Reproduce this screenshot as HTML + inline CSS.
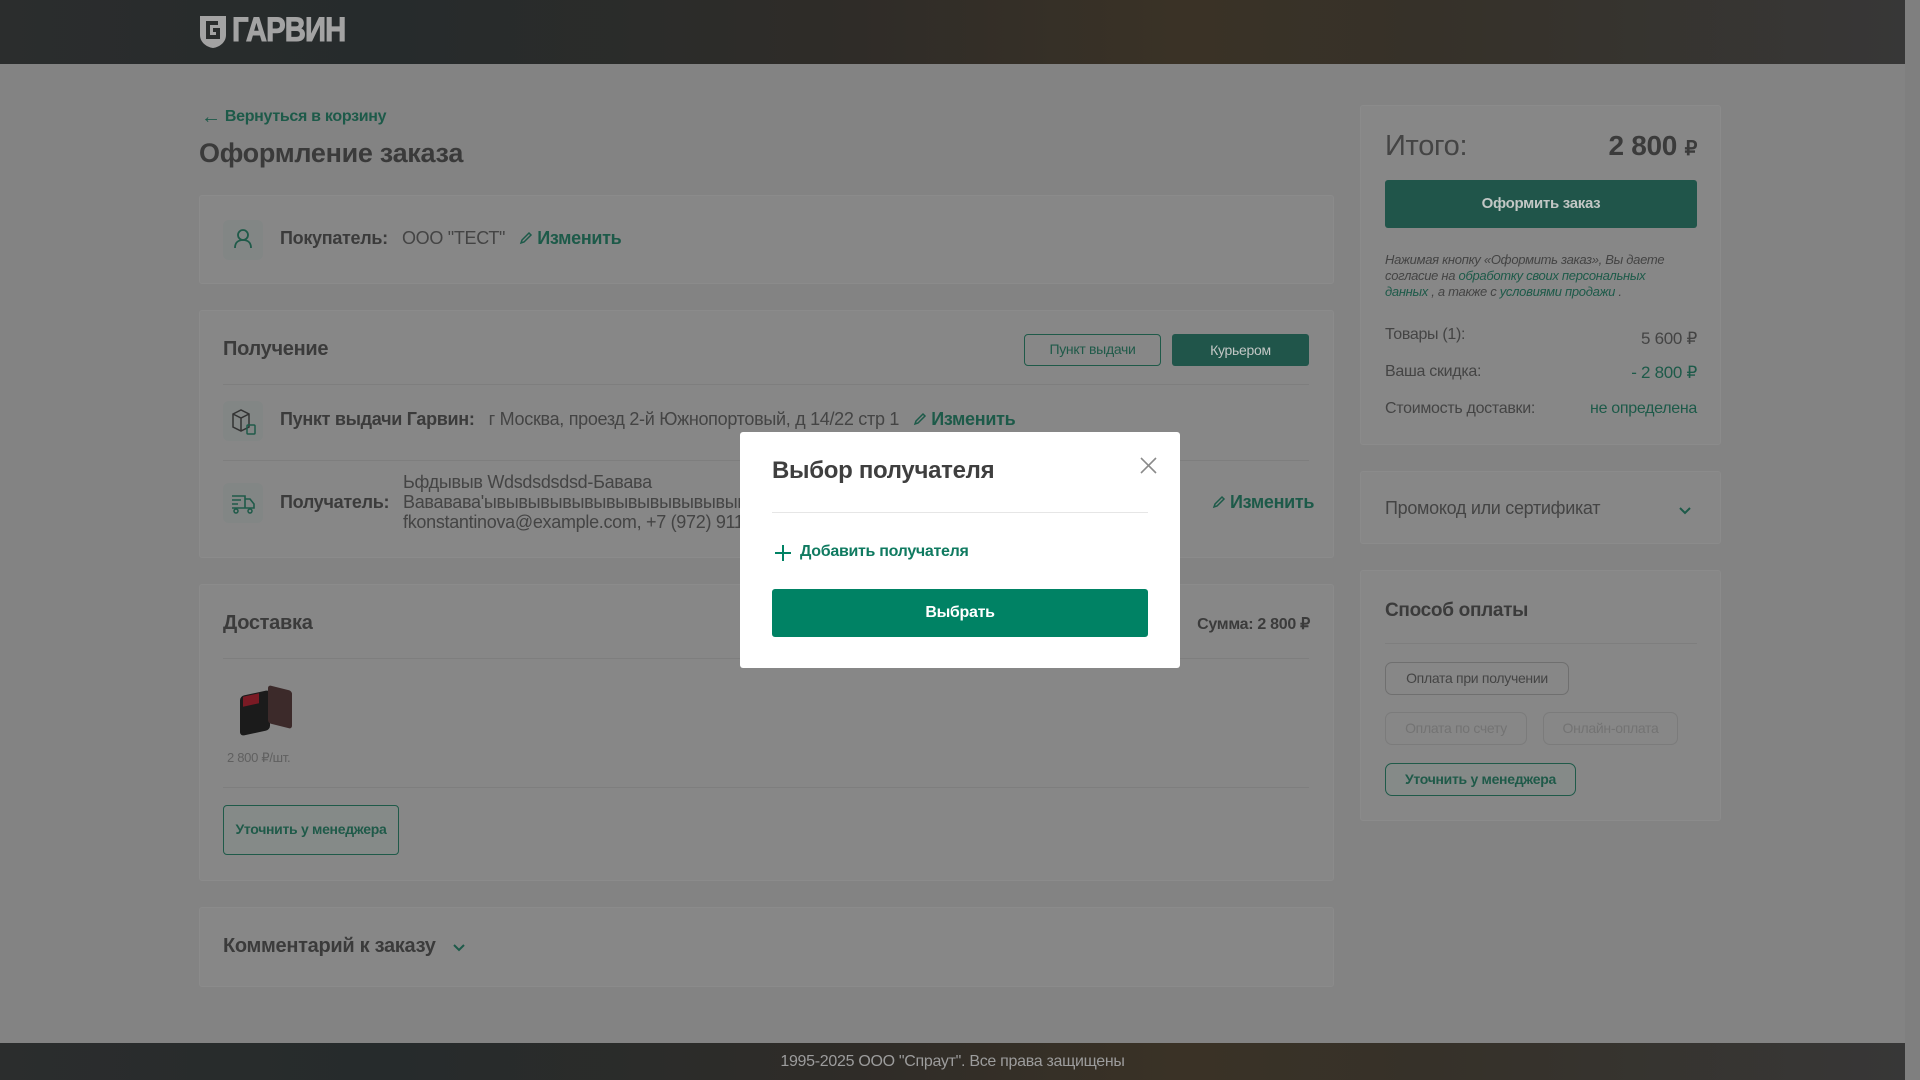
<!DOCTYPE html>
<html><head><meta charset="utf-8"><style>
*{box-sizing:border-box;margin:0;padding:0}
body{width:1920px;height:1080px;overflow:hidden;background:#838383;font-family:"Liberation Sans",sans-serif;color:#3b3b3b;position:relative;letter-spacing:-0.3px}
.abs{position:absolute}
.hdr{left:0;top:0;width:1905px;height:64px;background:linear-gradient(90deg,#2b2d2d 0%,#262b2c 20%,#2f2c28 45%,#3a3226 62%,#363129 75%,#373737 100%)}
.ftr{left:0;top:1043px;width:1905px;height:37px;background:linear-gradient(90deg,#2b2d2d 0%,#262b2c 20%,#2f2c28 45%,#3a3226 62%,#363129 75%,#373737 100%);color:#9c9c9c;font-size:16px;text-align:center;line-height:37px}
.sb{left:1905px;top:0;width:15px;height:1080px;background:#7f7f7f}
.card{background:#878787;border:1px solid #8b8b8b;border-radius:3px}
.g{color:#1d5a49}
.line{height:1px;background:#7e7e7e}
.ib{width:40px;height:40px;border-radius:6px;background:#828685}
.b{font-weight:bold}
.btnf{background:#20554a;border-radius:3px;color:#c2c7c5;text-align:center}
.btno{border:1.5px solid #1f5a49;border-radius:4px;text-align:center;color:#1f5a49}
.pill{border:1.5px solid #6f6f6f;border-radius:7px;font-size:14px;text-align:center;color:#444}
.pen{display:inline-block;width:14px;height:14px;vertical-align:-1px;margin-right:4px}
</style></head><body>
<div class="abs hdr"></div>
<div class="abs" style="left:199px;top:15px;width:28px;height:34px">
<svg width="28" height="34" viewBox="0 0 28 34"><path d="M1 1H27V20C27 27 21 32 14 33C7 32 1 27 1 20Z" fill="#a3a3a3"/><path d="M19 8H9V22H19V15H14" fill="none" stroke="#2a2d2d" stroke-width="4"/></svg></div>
<div class="abs b" style="left:232px;top:11px;font-size:34px;color:#a3a3a3;letter-spacing:-1px;transform:scaleX(0.86);transform-origin:left;-webkit-text-stroke:1px #a3a3a3">ГАРВИН</div>

<div class="abs g" style="left:201px;top:106px;font-size:16px;font-weight:bold"><span style="font-size:20px;vertical-align:-2px">←</span> Вернуться в корзину</div>
<div class="abs b" style="left:199px;top:138px;font-size:27px;color:#3a3a3a">Оформление заказа</div>

<!-- card1 -->
<div class="abs card" style="left:199px;top:195px;width:1135px;height:89px"></div>
<div class="abs ib" style="left:223px;top:220px"><svg width="40" height="40" viewBox="0 0 40 40"><circle cx="20" cy="15" r="5" fill="none" stroke="#1f5a49" stroke-width="1.8"/><path d="M12 28C12 22 16 20 20 20C24 20 28 22 28 28" fill="none" stroke="#1f5a49" stroke-width="1.8"/></svg></div>
<div class="abs" style="left:280px;top:228px;font-size:18px"><b>Покупатель:</b>&nbsp;&nbsp; <span style="color:#444">ООО "ТЕСТ"</span> &nbsp; <span class="g b"><svg class="pen" viewBox="0 0 14 14"><path d="M2 12L3 9L10 2L12 4L5 11Z" fill="none" stroke="#1d5a49" stroke-width="1.5"/></svg>Изменить</span></div>

<!-- card2 -->
<div class="abs card" style="left:199px;top:310px;width:1135px;height:248px"></div>
<div class="abs b" style="left:223px;top:338px;font-size:20px">Получение</div>
<div class="abs btno" style="left:1024px;top:334px;width:137px;height:32px;line-height:29px;font-size:14px">Пункт выдачи</div>
<div class="abs btnf" style="left:1172px;top:334px;width:137px;height:32px;line-height:32px;font-size:14px">Курьером</div>
<div class="abs line" style="left:223px;top:384px;width:1086px"></div>
<div class="abs ib" style="left:223px;top:401px"><svg width="40" height="40" viewBox="0 0 40 40"><path d="M10 13L18 9L26 13V26L18 30L10 26Z M10 13L18 17L26 13 M18 17V30" fill="none" stroke="#333" stroke-width="1.5"/><rect x="24" y="24" width="8" height="9" rx="1" fill="none" stroke="#1f5a49" stroke-width="1.5"/></svg></div>
<div class="abs" style="left:280px;top:409px;font-size:18px"><b>Пункт выдачи Гарвин:</b>&nbsp;&nbsp; <span style="color:#444">г Москва, проезд 2-й Южнопортовый, д 14/22 стр 1</span> &nbsp; <span class="g b"><svg class="pen" viewBox="0 0 14 14"><path d="M2 12L3 9L10 2L12 4L5 11Z" fill="none" stroke="#1d5a49" stroke-width="1.5"/></svg>Изменить</span></div>
<div class="abs line" style="left:223px;top:460px;width:1086px"></div>
<div class="abs ib" style="left:223px;top:483px"><svg width="40" height="40" viewBox="0 0 40 40"><path d="M9 13H22V25 M22 16H27L31 21V25H9 M9 17H18 M9 21H15" fill="none" stroke="#1f5a49" stroke-width="1.6"/><circle cx="13" cy="28" r="2" fill="none" stroke="#1f5a49" stroke-width="1.5"/><circle cx="27" cy="28" r="2" fill="none" stroke="#1f5a49" stroke-width="1.5"/></svg></div>
<div class="abs b" style="left:280px;top:492px;font-size:18px">Получатель:</div>
<div class="abs" style="left:403px;top:472px;font-size:18px;line-height:20px;color:#444;width:340px;overflow:hidden;white-space:nowrap">Ьфдывыв Wdsdsdsdsd-Бавава<br>Вававава'ывывывывывывывывывывывывыв<br>fkonstantinova@example.com, +7 (972) 911</div>
<div class="abs g b" style="left:1212px;top:492px;font-size:18px"><svg class="pen" viewBox="0 0 14 14"><path d="M2 12L3 9L10 2L12 4L5 11Z" fill="none" stroke="#1d5a49" stroke-width="1.5"/></svg>Изменить</div>

<!-- card3 -->
<div class="abs card" style="left:199px;top:584px;width:1135px;height:297px"></div>
<div class="abs b" style="left:223px;top:612px;font-size:20px">Доставка</div>
<div class="abs b" style="left:1150px;top:614px;width:160px;text-align:right;font-size:16px">Сумма: 2 800 ₽</div>
<div class="abs line" style="left:223px;top:658px;width:1086px"></div>
<div class="abs" style="left:240px;top:693px;width:30px;height:40px;background:#1b1b1b;border-radius:4px;transform:skewY(-12deg)"></div>
<div class="abs" style="left:243px;top:695px;width:16px;height:10px;background:#7a1a24;transform:skewY(-12deg)"></div>
<div class="abs" style="left:268px;top:688px;width:24px;height:38px;background:#3c2a2a;border-radius:3px;transform:skewY(14deg)"></div>
<div class="abs" style="left:227px;top:750px;font-size:13px;color:#606060">2 800 ₽/шт.</div>
<div class="abs line" style="left:223px;top:787px;width:1086px"></div>
<div class="abs btno b" style="left:223px;top:805px;width:176px;height:50px;line-height:47px;font-size:14px;background:#858a88">Уточнить у менеджера</div>

<!-- card4 -->
<div class="abs card" style="left:199px;top:907px;width:1135px;height:80px"></div>
<div class="abs b" style="left:223px;top:935px;font-size:20px">Комментарий к заказу</div>
<div class="abs" style="left:452px;top:940px"><svg width="14" height="10" viewBox="0 0 14 10"><path d="M2 2L7 7L12 2" fill="none" stroke="#1d5a49" stroke-width="2"/></svg></div>

<!-- right -->
<div class="abs card" style="left:1360px;top:105px;width:361px;height:340px"></div>
<div class="abs" style="left:1385px;top:130px;font-size:29px;color:#444">Итого:</div>
<div class="abs b" style="left:1560px;top:130px;width:137px;text-align:right;font-size:28px">2 800 <span style="font-size:20px">₽</span></div>
<div class="abs btnf" style="left:1385px;top:180px;width:312px;height:48px;line-height:48px;font-size:15px;font-weight:bold">Оформить заказ</div>
<div class="abs" style="left:1385px;top:252px;width:292px;font-size:13px;line-height:16px;font-style:italic;color:#444">Нажимая кнопку «Оформить заказ», Вы даете согласие на <span class="g">обработку своих персональных данных</span> , а также с <span class="g">условиями продажи</span> .</div>
<div class="abs" style="left:1385px;top:326px;font-size:16px;color:#444">Товары (1):</div>
<div class="abs" style="left:1560px;top:329px;width:137px;text-align:right;font-size:17px;color:#444">5 600 ₽</div>
<div class="abs" style="left:1385px;top:363px;font-size:16px;color:#444">Ваша скидка:</div>
<div class="abs g" style="left:1560px;top:363px;width:137px;text-align:right;font-size:17px">- 2 800 ₽</div>
<div class="abs" style="left:1385px;top:400px;font-size:16px;color:#444">Стоимость доставки:</div>
<div class="abs g" style="left:1560px;top:400px;width:137px;text-align:right;font-size:16px">не определена</div>

<div class="abs card" style="left:1360px;top:471px;width:361px;height:73px"></div>
<div class="abs" style="left:1385px;top:498px;font-size:18px;color:#444">Промокод или сертификат</div>
<div class="abs" style="left:1678px;top:503px"><svg width="14" height="10" viewBox="0 0 14 10"><path d="M2 2L7 7L12 2" fill="none" stroke="#1d5a49" stroke-width="2"/></svg></div>

<div class="abs card" style="left:1360px;top:570px;width:361px;height:251px"></div>
<div class="abs b" style="left:1385px;top:600px;font-size:19px">Способ оплаты</div>
<div class="abs line" style="left:1385px;top:643px;width:312px"></div>
<div class="abs pill" style="left:1385px;top:662px;width:184px;height:33px;line-height:30px">Оплата при получении</div>
<div class="abs pill" style="left:1385px;top:712px;width:142px;height:33px;line-height:30px;border-color:#7b7b7b;color:#737373">Оплата по счету</div>
<div class="abs pill" style="left:1543px;top:712px;width:135px;height:33px;line-height:30px;border-color:#7b7b7b;color:#737373">Онлайн-оплата</div>
<div class="abs pill b" style="left:1385px;top:763px;width:191px;height:33px;line-height:30px;border-color:#1f5a49;color:#1f5a49;background:#858a88">Уточнить у менеджера</div>

<div class="abs ftr">1995-2025 ООО "Спраут". Все права защищены</div>
<div class="abs sb"></div>

<!-- modal -->
<div class="abs" style="left:740px;top:432px;width:440px;height:236px;background:#fff;border-radius:3px"></div>
<div class="abs b" style="left:772px;top:457px;font-size:24px;color:#3f3f3f">Выбор получателя</div>
<div class="abs" style="left:1140px;top:457px"><svg width="17" height="17" viewBox="0 0 17 17"><path d="M1 1L16 16M16 1L1 16" stroke="#8a8a8a" stroke-width="1.6"/></svg></div>
<div class="abs" style="left:772px;top:512px;width:376px;height:1px;background:#e6e6e6"></div>
<div class="abs" style="left:775px;top:545px"><svg width="16" height="16" viewBox="0 0 16 16"><path d="M8 0V16M0 8H16" stroke="#008264" stroke-width="2"/></svg></div>
<div class="abs b" style="left:800px;top:543px;font-size:16px;color:#0f7a60">Добавить получателя</div>
<div class="abs b" style="left:772px;top:589px;width:376px;height:48px;line-height:48px;background:#008264;border-radius:3px;color:#fff;text-align:center;font-size:16px">Выбрать</div>
</body></html>
